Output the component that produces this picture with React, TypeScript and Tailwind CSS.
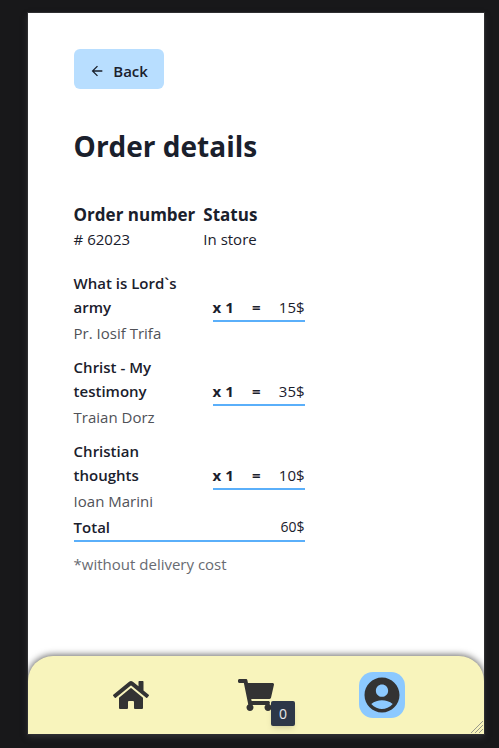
import { FaHome, FaShoppingCart } from "react-icons/fa";
import { MdAccountCircle, MdArrowBack } from "react-icons/md";

const items = [
  { title: "What is Lord`s army", author: "Pr. Iosif Trifa", quantity: 1, price: 15 },
  { title: "Christ - My testimony", author: "Traian Dorz", quantity: 1, price: 35 },
  { title: "Christian thoughts", author: "Ioan Marini", quantity: 1, price: 10 },
];

function OrderItem({ title, author, quantity, price }: (typeof items)[number]) {
  return (
    <li className="flex items-center justify-between">
      <div className="w-[120px]">
        <h3 className="font-semibold">{title}</h3>
        <p className="mt-0.5 text-[#505258]">{author}</p>
      </div>
      <div className="flex w-[92px] justify-between border-b-2 border-[#5aaffa] pb-px">
        <span className="font-bold">x {quantity}</span>
        <span className="font-bold">=</span>
        <span>{price}$</span>
      </div>
    </li>
  );
}

function BottomNav() {
  return (
    <nav className="flex h-[78px] items-center justify-evenly rounded-t-[25px] bg-[#f8f4bc] text-[#333] shadow-[0_0_7px_1px_rgba(0,0,0,0.6)]">
      <a href="#home" aria-label="Home" className="flex size-[46px] items-center justify-center">
        <FaHome className="size-9" />
      </a>
      <a href="#cart" aria-label="Cart" className="relative flex size-[46px] items-center justify-center">
        <FaShoppingCart className="size-9" />
        <span className="absolute -right-4 -bottom-2 flex h-[25px] w-6 items-center justify-center rounded-xs bg-[#2d3748] text-sm text-white/90 shadow-md">
          0
        </span>
      </a>
      <a
        href="#account"
        aria-label="Account"
        className="flex size-[46px] items-center justify-center rounded-[14px] bg-[#8cc9ff]"
      >
        <MdAccountCircle className="size-[42px]" />
      </a>
    </nav>
  );
}

export default function App() {
  return (
    <div className="flex min-h-screen flex-col bg-[#18181a] pt-[13px] pr-[15px] pb-[14px] pl-7 font-['Open_Sans','Noto_Sans',sans-serif] text-[15px] leading-6 text-[#1a202c]">
      <div className="relative flex flex-1 flex-col overflow-hidden bg-white shadow-[0_0_0_1px_#2e2e31,0_3px_6px_#333336]">
        <main className="flex flex-1 flex-col items-start px-[10%] pt-9">
          <button
            type="button"
            className="flex h-10 w-[90px] items-center justify-center gap-2 rounded-md bg-[#b8deff] pt-1 font-semibold"
          >
            <MdArrowBack className="size-4" />
            Back
          </button>
          <h1 className="mt-[39px] text-[28px] leading-9 font-bold">Order details</h1>
          <dl className="mt-[39px] flex gap-2">
            <div>
              <dt className="text-[17px] font-bold">Order number</dt>
              <dd># 62023</dd>
            </div>
            <div>
              <dt className="text-[17px] font-bold">Status</dt>
              <dd>In store</dd>
            </div>
          </dl>
          <section className="mt-5 w-[231px]">
            <ul className="flex flex-col gap-[10px]">
              {items.map((item) => (
                <OrderItem key={item.title} {...item} />
              ))}
            </ul>
            <div className="mt-0.5 flex justify-between border-b-2 border-[#5aaffa] pb-px">
              <span className="font-semibold">Total</span>
              <span className="text-sm leading-6">60$</span>
            </div>
            <p className="mt-2.5 text-[#686b72]">*without delivery cost</p>
          </section>
        </main>
        <BottomNav />
        <svg
          aria-hidden="true"
          viewBox="0 0 13 13"
          className="absolute right-px bottom-px size-[13px] stroke-[#99998c]"
        >
          <path d="M1 13 13 1M5 13 13 5M9 13 13 9" fill="none" />
        </svg>
      </div>
    </div>
  );
}
